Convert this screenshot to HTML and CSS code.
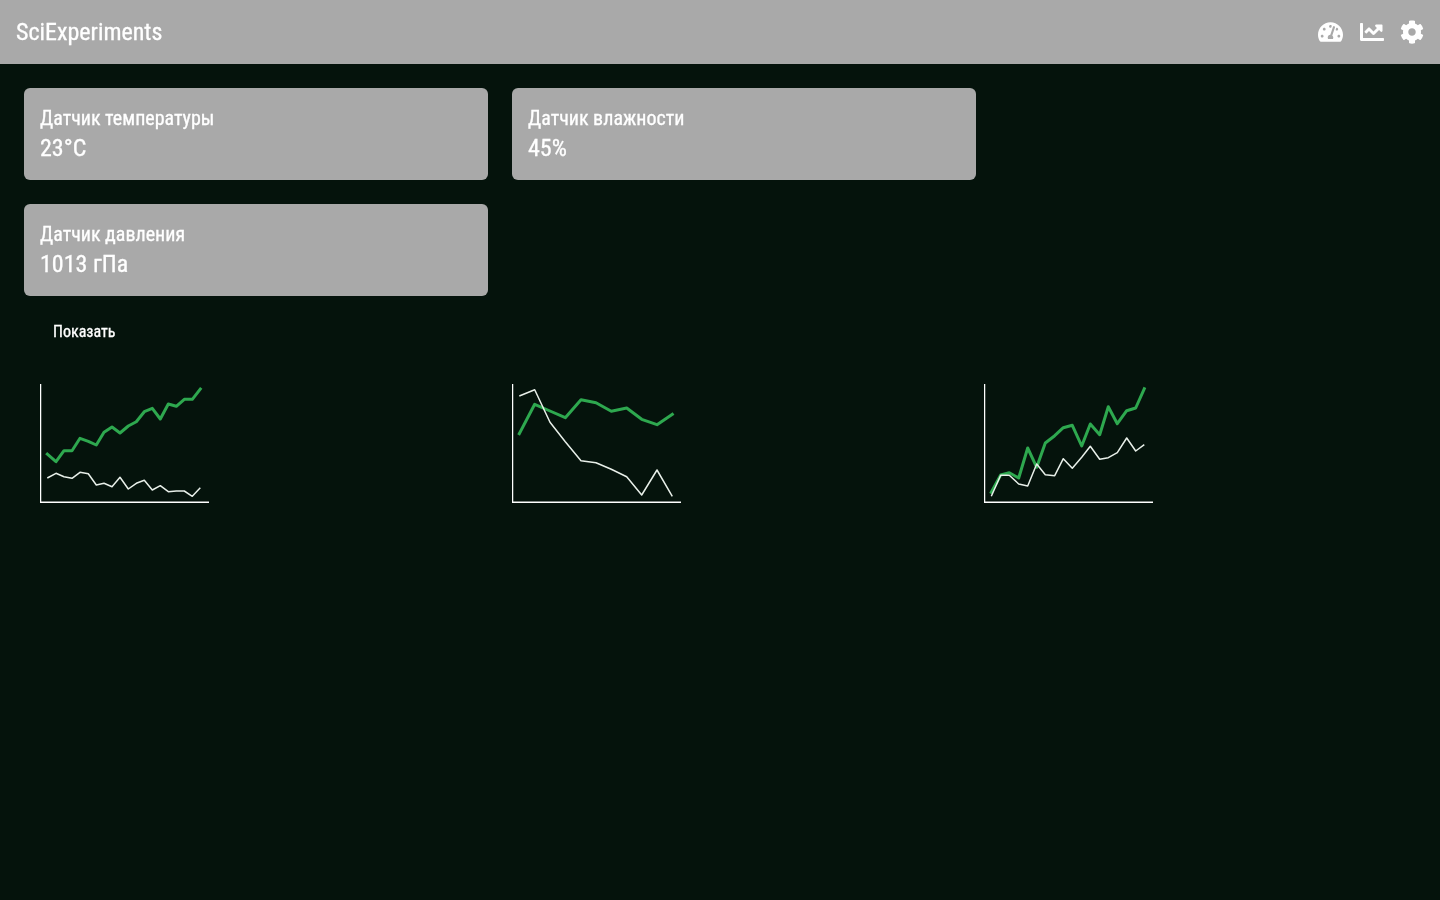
FILE: index.html
```html
<!DOCTYPE html>
<html lang="ru">
<head>
    <meta charset="UTF-8">
    <meta name="viewport" content="width=device-width, initial-scale=1.0">
    <title>SciExperiments</title>
    <link rel="stylesheet" href="styles.css">
</head>
<body>
    <header class="topbar">
        <h1 class="brand">SciExperiments</h1>
        <nav class="topbar-icons">
            <svg class="icon icon-gauge" viewBox="0 0 576 512"><path d="M288 32C128.94 32 0 160.94 0 320c0 52.8 14.25 102.26 39.06 144.8 5.61 9.62 16.3 15.2 27.44 15.2h443c11.14 0 21.83-5.58 27.44-15.2C561.75 422.26 576 372.8 576 320c0-159.06-128.94-288-288-288zm0 64c14.71 0 26.58 10.13 30.32 23.65-1.11 2.26-2.64 4.23-3.45 6.67l-9.22 27.67c-5.13 3.49-10.97 6.01-17.64 6.01-17.67 0-32-14.33-32-32S270.33 96 288 96zM96 384c-17.67 0-32-14.33-32-32s14.33-32 32-32 32 14.33 32 32-14.33 32-32 32zm48-160c-17.67 0-32-14.33-32-32s14.33-32 32-32 32 14.33 32 32-14.33 32-32 32zm246.77-72.41l-61.33 184C343.13 347.33 352 364.54 352 384c0 11.72-3.38 22.55-8.88 32H232.88c-5.5-9.45-8.88-20.28-8.88-32 0-33.94 26.5-61.43 59.9-63.59l61.34-184.01c4.17-12.56 17.73-19.45 30.36-15.17 12.57 4.19 19.35 17.79 15.17 30.36zm14.66 57.2l15.52-46.55c3.47-1.29 7.13-2.23 11.05-2.23 17.67 0 32 14.33 32 32s-14.33 32-32 32c-11.38-.01-20.89-6.28-26.57-15.22zM480 384c-17.67 0-32-14.33-32-32s14.33-32 32-32 32 14.33 32 32-14.33 32-32 32z"/></svg>
            <svg class="icon" viewBox="0 0 512 512"><path d="M496 384H64V80c0-8.84-7.16-16-16-16H16C7.16 64 0 71.16 0 80v336c0 17.67 14.33 32 32 32h464c8.84 0 16-7.16 16-16v-32c0-8.84-7.16-16-16-16zM464 96H345.94c-21.38 0-32.09 25.85-16.97 40.97l32.4 32.4L288 242.75l-73.37-73.37c-12.5-12.5-32.76-12.5-45.25 0l-68.69 68.69c-6.25 6.25-6.25 16.38 0 22.63l22.62 22.62c6.25 6.25 16.38 6.25 22.63 0L192 237.25l73.37 73.37c12.5 12.5 32.76 12.5 45.25 0l96-96 32.4 32.4c15.12 15.12 40.97 4.41 40.97-16.97V112c.01-8.84-7.15-16-16-16z"/></svg>
            <svg class="icon" viewBox="0 0 512 512"><path d="M487.4 315.7l-42.6-24.6c4.3-23.2 4.3-47 0-70.2l42.6-24.6c4.9-2.8 7.1-8.6 5.5-14-11.1-35.6-30-67.8-54.7-94.6-3.8-4.1-10-5.1-14.8-2.3L380.8 110c-17.9-15.4-38.5-27.3-60.8-35.1V25.8c0-5.6-3.9-10.5-9.4-11.7-36.7-8.2-74.3-7.8-109.2 0-5.5 1.2-9.4 6.1-9.4 11.7V75c-22.2 7.9-42.8 19.8-60.8 35.1L88.7 85.5c-4.9-2.8-11-1.9-14.8 2.3-24.7 26.7-43.6 58.9-54.7 94.6-1.7 5.4.6 11.2 5.5 14L67.3 221c-4.3 23.2-4.3 47 0 70.2l-42.6 24.6c-4.9 2.8-7.1 8.6-5.5 14 11.1 35.6 30 67.8 54.7 94.6 3.8 4.1 10 5.1 14.8 2.3l42.6-24.6c17.9 15.4 38.5 27.3 60.8 35.1v49.2c0 5.6 3.9 10.5 9.4 11.7 36.7 8.2 74.3 7.8 109.2 0 5.5-1.2 9.4-6.1 9.4-11.7v-49.2c22.2-7.9 42.8-19.8 60.8-35.1l42.6 24.6c4.9 2.8 11 1.9 14.8-2.3 24.7-26.7 43.6-58.9 54.7-94.6 1.5-5.5-.7-11.3-5.6-14.1zM256 336c-44.1 0-80-35.9-80-80s35.9-80 80-80 80 35.9 80 80-35.9 80-80 80z"/></svg>
        </nav>
    </header>

    <main class="content">
        <section class="cards">
            <div class="card">
                <div class="card-title">Датчик температуры</div>
                <div class="card-value">23°C</div>
            </div>
            <div class="card">
                <div class="card-title">Датчик влажности</div>
                <div class="card-value">45%</div>
            </div>
            <div class="card">
                <div class="card-title">Датчик давления</div>
                <div class="card-value">1013 гПа</div>
            </div>
        </section>

        <button class="show-btn" type="button">Показать</button>

        <section class="charts">
            <svg class="chart" viewBox="0 0 170 120">
                <path class="axis" d="M0.5 0V118.3H169"/>
                <polyline class="line-white" points="7.3,94 16,89.3 24,92.7 32,94.3 40,88.3 48.3,89.7 56.3,101 64,99.3 72,102.7 80,93.3 88.3,105 96.3,99.3 104.3,96.3 112.3,106 120.3,101.7 128.3,107.7 136.3,107 144.3,107 152.3,112.3 160.3,103.7"/>
                <polyline class="line-green" points="7.3,70 16,77.7 24,66.7 32,66.7 40,54.3 48.3,57.3 56.3,61 64,48.3 72,43 80,49 88.3,42 96.3,37.7 104.3,27.7 112.3,24.3 120.3,35 128.3,20 136.3,22.3 144.3,15.3 152.3,15.3 160.3,5"/>
            </svg>
            <svg class="chart" viewBox="0 0 170 120">
                <path class="axis" d="M0.5 0V118.3H169"/>
                <polyline class="line-green" points="7.3,49.7 22.7,20.3 38,27 53.3,33.7 69,15.7 84,18.7 99.3,27.3 114.7,24 129.7,35.3 145,40.7 160.3,30.3"/>
                <polyline class="line-white" points="7.3,12 22.7,5.7 38,38.3 53.3,57.7 69,76.7 84,78.7 99.3,85.3 114.7,92.7 129.7,111 145,86 160.3,112.3"/>
            </svg>
            <svg class="chart" viewBox="0 0 170 120">
                <path class="axis" d="M0.5 0V118.3H169"/>
                <polyline class="line-green" points="7.3,108.3 16.7,91 25.3,88.7 34.7,94 43.7,64 52.7,83.3 61.3,59 70.7,51.7 79.3,43.7 88.3,41.3 97.7,62 106.3,40 115.7,50.7 124.3,22.7 133.3,39.7 142.7,26.7 151.7,24 160.3,4.7"/>
                <polyline class="line-white" points="7.3,112.3 16.7,91.3 25.3,91.3 34.7,100 43.7,102 52.7,80 61.3,90.7 70.7,91.7 79.3,74.7 88.3,84.3 97.7,73.3 106.3,62.3 115.7,75.3 124.3,73.7 133.3,68.7 142.7,54 151.7,67 160.3,60.7"/>
            </svg>
        </section>
    </main>
</body>
</html>
```

FILE: styles.css
```css
body {
    font-family: Roboto, "Liberation Sans", sans-serif;
    font-stretch: condensed;
    margin: 0;
    padding: 0;
    min-height: 100vh;
    background-color: #05130c;
    color: #fff;
}
.topbar {
    display: flex;
    align-items: center;
    justify-content: space-between;
    height: 64px;
    padding: 0 16px;
    background-color: #a9a9a9;
}
.brand {
    margin: 0;
    font-size: 24px;
    font-weight: 400;
}
.brand,
.card-title,
.card-value,
.show-btn {
    will-change: transform;
    -webkit-text-stroke: 0.3px #fff;
}
.topbar-icons {
    display: flex;
    align-items: center;
    gap: 16px;
}
.icon {
    display: block;
    width: 24px;
    height: 24px;
    fill: #fff;
}
.icon-gauge {
    width: 25px;
    margin-right: 1px;
}
.content {
    padding: 24px;
}
.cards {
    display: grid;
    grid-template-columns: 464px 464px;
    gap: 24px;
}
.card {
    height: 92px;
    box-sizing: border-box;
    padding: 16px;
    background-color: #a9a9a9;
    border-radius: 6px;
}
.card-title {
    font-size: 20px;
    font-weight: 400;
    line-height: 28px;
}
.card-value {
    font-size: 24px;
    line-height: 32px;
}
.show-btn {
    display: block;
    height: 36px;
    margin: 17px 0 0;
    padding: 0 29px;
    background: none;
    border: none;
    color: #fff;
    font: inherit;
    font-size: 16px;
    cursor: pointer;
}
.charts {
    display: grid;
    grid-template-columns: repeat(3, 472px);
    margin-top: 35px;
    margin-left: 16px;
}
.chart {
    display: block;
    width: 170px;
    height: 120px;
}
.axis,
.line-white,
.line-green {
    fill: none;
    stroke-linejoin: round;
}
.axis {
    stroke: #fff;
    stroke-width: 1.5;
}
.line-white {
    stroke: #e8efe9;
    stroke-width: 1.5;
}
.line-green {
    stroke: #2ea84f;
    stroke-width: 3;
    stroke-linecap: square;
}
```
